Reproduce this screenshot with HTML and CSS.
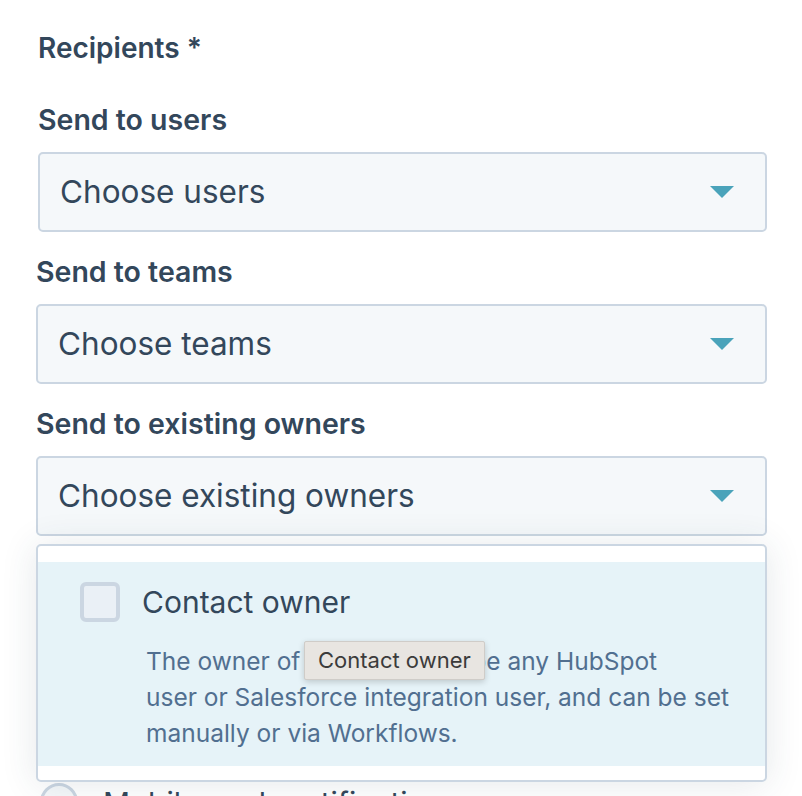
FILE: index.html
```html
<!DOCTYPE html>
<html lang="en">
<head>
<meta charset="utf-8">
<title>Recipients</title>
<link rel="stylesheet" href="styles.css">
</head>
<body>
<div class="form">
  <div class="title">Recipients *</div>

  <div class="field first">
    <div class="label">Send to users</div>
    <div class="select">
      <span class="select-text">Choose users</span>
      <span class="caret"></span>
    </div>
  </div>

  <div class="field">
    <div class="label">Send to teams</div>
    <div class="select">
      <span class="select-text">Choose teams</span>
      <span class="caret"></span>
    </div>
  </div>

  <div class="field owners">
    <div class="label">Send to existing owners</div>
    <div class="select">
      <span class="select-text">Choose existing owners</span>
      <span class="caret"></span>
    </div>

    <div class="menu">
      <div class="item">
        <div class="item-row">
          <span class="checkbox"></span>
          <span class="item-label">Contact owner</span>
        </div>
        <div class="item-desc">The owner of a contact can be any HubSpot<br>user or Salesforce integration user, and can be set manually or via Workflows.</div>
        <div class="tooltip">Contact owner</div>
      </div>
    </div>
  </div>

  <div class="radio-row">
    <span class="radio"></span>
    <span class="radio-label">Mobile push notification</span>
  </div>
</div>
</body>
</html>
```

FILE: styles.css
```css
html, body {
  margin: 0;
  padding: 0;
  background: #ffffff;
  overflow: hidden;
}

body {
  font-family: "Inter", "Noto Sans", sans-serif;
  color: #33475b;
}

.form {
  margin-left: 36px;
  width: 731px;
}

.title {
  margin-top: 30px;
  padding-left: 2px;
  font-size: 28px;
  line-height: 36px;
  font-weight: 600;
}

.field {
  position: relative;
  margin-top: 22px;
}

.field.first {
  margin-top: 36px;
  margin-left: 2px;
}

.label {
  font-size: 28.5px;
  line-height: 36px;
  font-weight: 600;
}

.select {
  margin-top: 14px;
  height: 80px;
  box-sizing: border-box;
  border: 2px solid #cbd6e2;
  border-radius: 5px;
  background: #f5f8fa;
  display: flex;
  align-items: center;
  justify-content: space-between;
  padding: 0 31px 0 20px;
}

.select-text {
  font-size: 31.5px;
  line-height: 40px;
  color: #33475b;
}

.caret {
  width: 0;
  height: 0;
  border-left: 12px solid transparent;
  border-right: 12px solid transparent;
  border-top: 12px solid #4aa3ba;
}

.menu {
  position: absolute;
  left: 0;
  right: 0;
  top: calc(100% + 8px);
  box-sizing: border-box;
  border: 2px solid #cbd6e2;
  border-radius: 5px;
  background: #ffffff;
  padding: 16px 0 14px;
  box-shadow: 0 2px 36px rgba(45, 62, 80, 0.12);
  z-index: 2;
}

.item {
  position: relative;
  background: #e6f3f8;
  padding: 20px 0 15px;
}

.item-row {
  display: flex;
  align-items: center;
  height: 40px;
  padding-left: 42px;
}

.checkbox {
  width: 40px;
  height: 40px;
  box-sizing: border-box;
  border: 4px solid #cbd6e2;
  border-radius: 6px;
  background: #eaf0f6;
}

.item-label {
  margin-left: 22px;
  font-size: 30px;
  line-height: 40px;
  color: #33475b;
}

.item-desc {
  margin-top: 21px;
  margin-left: 108px;
  width: 600px;
  font-size: 24.5px;
  line-height: 36px;
  color: #516f90;
}

.tooltip {
  position: absolute;
  left: 266px;
  top: 79px;
  height: 39px;
  box-sizing: border-box;
  padding: 0 13px;
  border: 1px solid #cfccc8;
  border-radius: 2px;
  background: #e8e5e1;
  box-shadow: 0 2px 6px rgba(0, 0, 0, 0.18);
  font-family: "Inter", "Noto Sans", sans-serif;
  font-size: 22px;
  line-height: 37px;
  color: #3b3b3b;
  white-space: nowrap;
}

.radio-row {
  margin-top: 247px;
  display: flex;
  align-items: flex-start;
  height: 40px;
}

.radio {
  margin-left: 4px;
  width: 38px;
  height: 38px;
  box-sizing: border-box;
  border: 3px solid #cbd6e2;
  border-radius: 50%;
  background: #f5f8fa;
}

.radio-label {
  margin-left: 25px;
  font-size: 30px;
  line-height: 40px;
  color: #33475b;
}
```
